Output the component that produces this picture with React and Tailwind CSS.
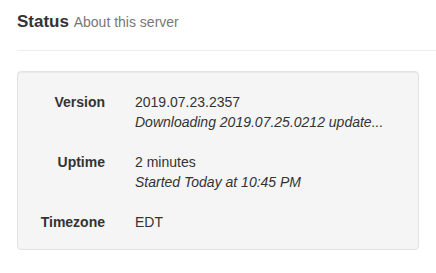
export default function App() {

    const rows = [
        { label: "Version", value: "2019.07.23.2357", note: "Downloading 2019.07.25.0212 update..." },
        { label: "Uptime", value: "2 minutes", note: "Started Today at 10:45 PM" },
        { label: "Timezone", value: "EDT" },
    ];

    return (
        <div className="min-h-screen bg-white text-[#333] font-['Liberation_Sans',Arial,sans-serif]">

            {/* Page header */}
            <div className="ml-[17px] pt-[12px] pb-[18px] border-b border-[#eee]">
                <h1 className="text-[17px] leading-[20px] font-bold">
                    Status{" "}
                    <small className="text-[14px] font-normal text-[#777]">About this server</small>
                </h1>
            </div>

            {/* Well */}
            <div className="mx-[17px] mt-[20px] pt-[20px] pb-[17px] px-[19px] bg-[#f5f5f5] border border-[#e3e3e3] rounded shadow-[inset_0_1px_1px_rgba(0,0,0,0.05)]">
                <div className="flex flex-col gap-[20px] text-[14px] leading-[20px]">
                    {rows.map((row) => (
                        <div key={row.label} className="flex">
                            <div className="w-[68px] shrink-0 text-right font-bold">
                                {row.label}
                            </div>
                            <div className="ml-[30px]">
                                <div>{row.value}</div>
                                {row.note && <div className="italic">{row.note}</div>}
                            </div>
                        </div>
                    ))}
                </div>
            </div>

        </div>
    );
}
